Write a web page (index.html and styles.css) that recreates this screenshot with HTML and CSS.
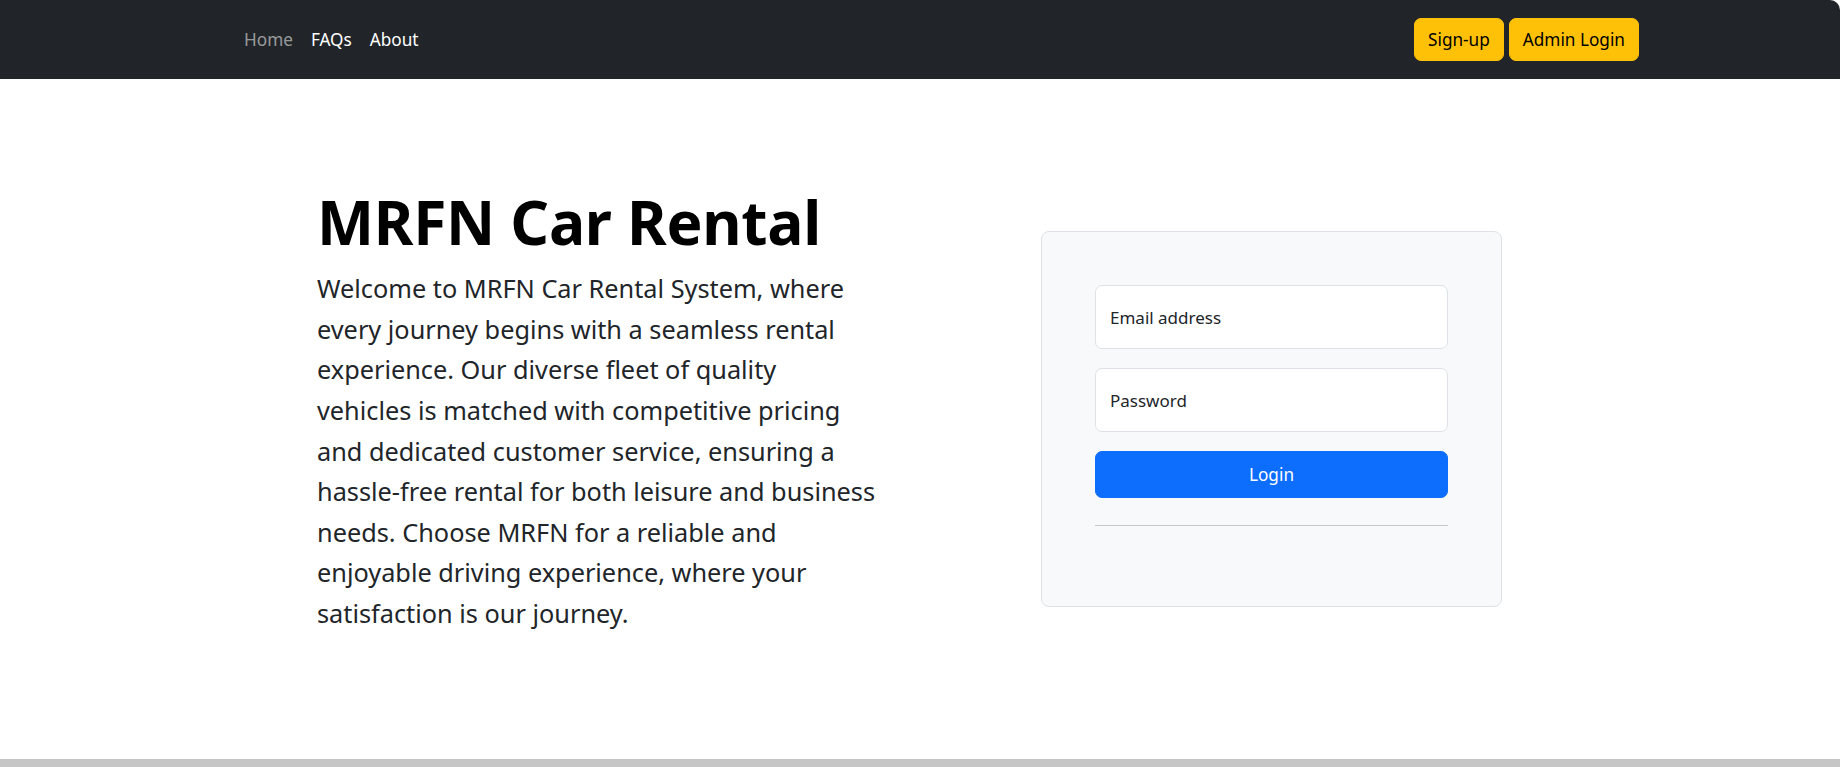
FILE: index.html
```html
<!DOCTYPE html>
<html lang="en">
<head>
<meta charset="utf-8">
<title>MRFN Car Rental</title>
<link rel="stylesheet" href="styles.css">
</head>
<body>
<div class="page">
  <header class="navbar">
    <nav class="nav-links">
      <a class="nav-link muted" href="#">Home</a>
      <a class="nav-link" href="#">FAQs</a>
      <a class="nav-link" href="#">About</a>
    </nav>
    <div class="nav-actions">
      <button class="btn btn-warning" type="button">Sign-up</button>
      <button class="btn btn-warning" type="button">Admin Login</button>
    </div>
  </header>
  <main class="hero">
    <section class="hero-text">
      <h1 class="title">MRFN Car Rental</h1>
      <p class="lead">Welcome to MRFN Car Rental System, where<br>
        every journey begins with a seamless rental<br>
        experience. Our diverse fleet of quality<br>
        vehicles is matched with competitive pricing<br>
        and dedicated customer service, ensuring a<br>
        hassle-free rental for both leisure and business<br>
        needs. Choose MRFN for a reliable and<br>
        enjoyable driving experience, where your<br>
        satisfaction is our journey.</p>
    </section>
    <form class="login-card">
      <input class="field" type="email" placeholder="Email address">
      <input class="field" type="password" placeholder="Password">
      <button class="btn btn-primary" type="button">Login</button>
      <hr class="divider">
    </form>
  </main>
  <div class="bottom-bar"></div>
</div>
</body>
</html>
```

FILE: styles.css
```css
* { box-sizing: border-box; }

html, body {
  margin: 0;
  padding: 0;
  background: #ffffff;
}

body {
  font-family: "Noto Sans", "Open Sans", sans-serif;
  color: #212529;
}

.page {
  display: flex;
  flex-direction: column;
  height: 767px;
  overflow: hidden;
}

.navbar {
  height: 79px;
  flex: 0 0 79px;
  background: #212529;
  border-top-right-radius: 10px;
  display: flex;
  align-items: center;
  justify-content: space-between;
  padding: 0 201px 0 235px;
}

.nav-links {
  display: flex;
  align-items: center;
}

.nav-link {
  color: #ffffff;
  text-decoration: none;
  font-size: 17.2px;
  padding: 0 9px;
  line-height: 1.5;
}

.nav-link.muted {
  color: rgba(255, 255, 255, 0.55);
}

.nav-actions {
  display: flex;
  gap: 5px;
}

.btn {
  font-family: inherit;
  font-size: 17.2px;
  line-height: 1.5;
  border: 1px solid transparent;
  border-radius: 7px;
  cursor: pointer;
}

.btn-warning {
  background: #ffc107;
  border-color: #ffc107;
  color: #000000;
  height: 43px;
  padding: 0 13px;
}

.hero {
  flex: 1 1 auto;
  display: flex;
  align-items: center;
  padding-left: 317px;
  gap: 124px;
}

.hero-text {
  width: 600px;
}

.title {
  margin: 0 0 10px 0;
  font-size: 60.5px;
  font-weight: 700;
  line-height: 1.2;
  color: #000000;
  letter-spacing: -0.3px;
}

.lead {
  margin: 0 0 19px 0;
  font-size: 25.3px;
  line-height: 40.6px;
  color: #212529;
}

.login-card {
  width: 461px;
  padding: 53px;
  background: #f8f9fa;
  border: 1px solid #dee2e6;
  border-radius: 8px;
  display: flex;
  flex-direction: column;
}

.field {
  height: 64px;
  width: 100%;
  margin: 0 0 19px 0;
  padding: 0 14px;
  border: 1px solid #dee2e6;
  border-radius: 7px;
  background: #ffffff;
  font-family: inherit;
  font-size: 17px;
  color: #212529;
}

.field::placeholder {
  color: #212529;
  opacity: 1;
}

.btn-primary {
  height: 47px;
  width: 100%;
  background: #0d6efd;
  border-color: #0d6efd;
  color: #ffffff;
}

.divider {
  margin: 27px 0;
  border: 0;
  border-top: 1px solid #c6c7c8;
  height: 0;
}

.bottom-bar {
  flex: 0 0 8px;
  height: 8px;
  background: #c6c6c6;
}
```
